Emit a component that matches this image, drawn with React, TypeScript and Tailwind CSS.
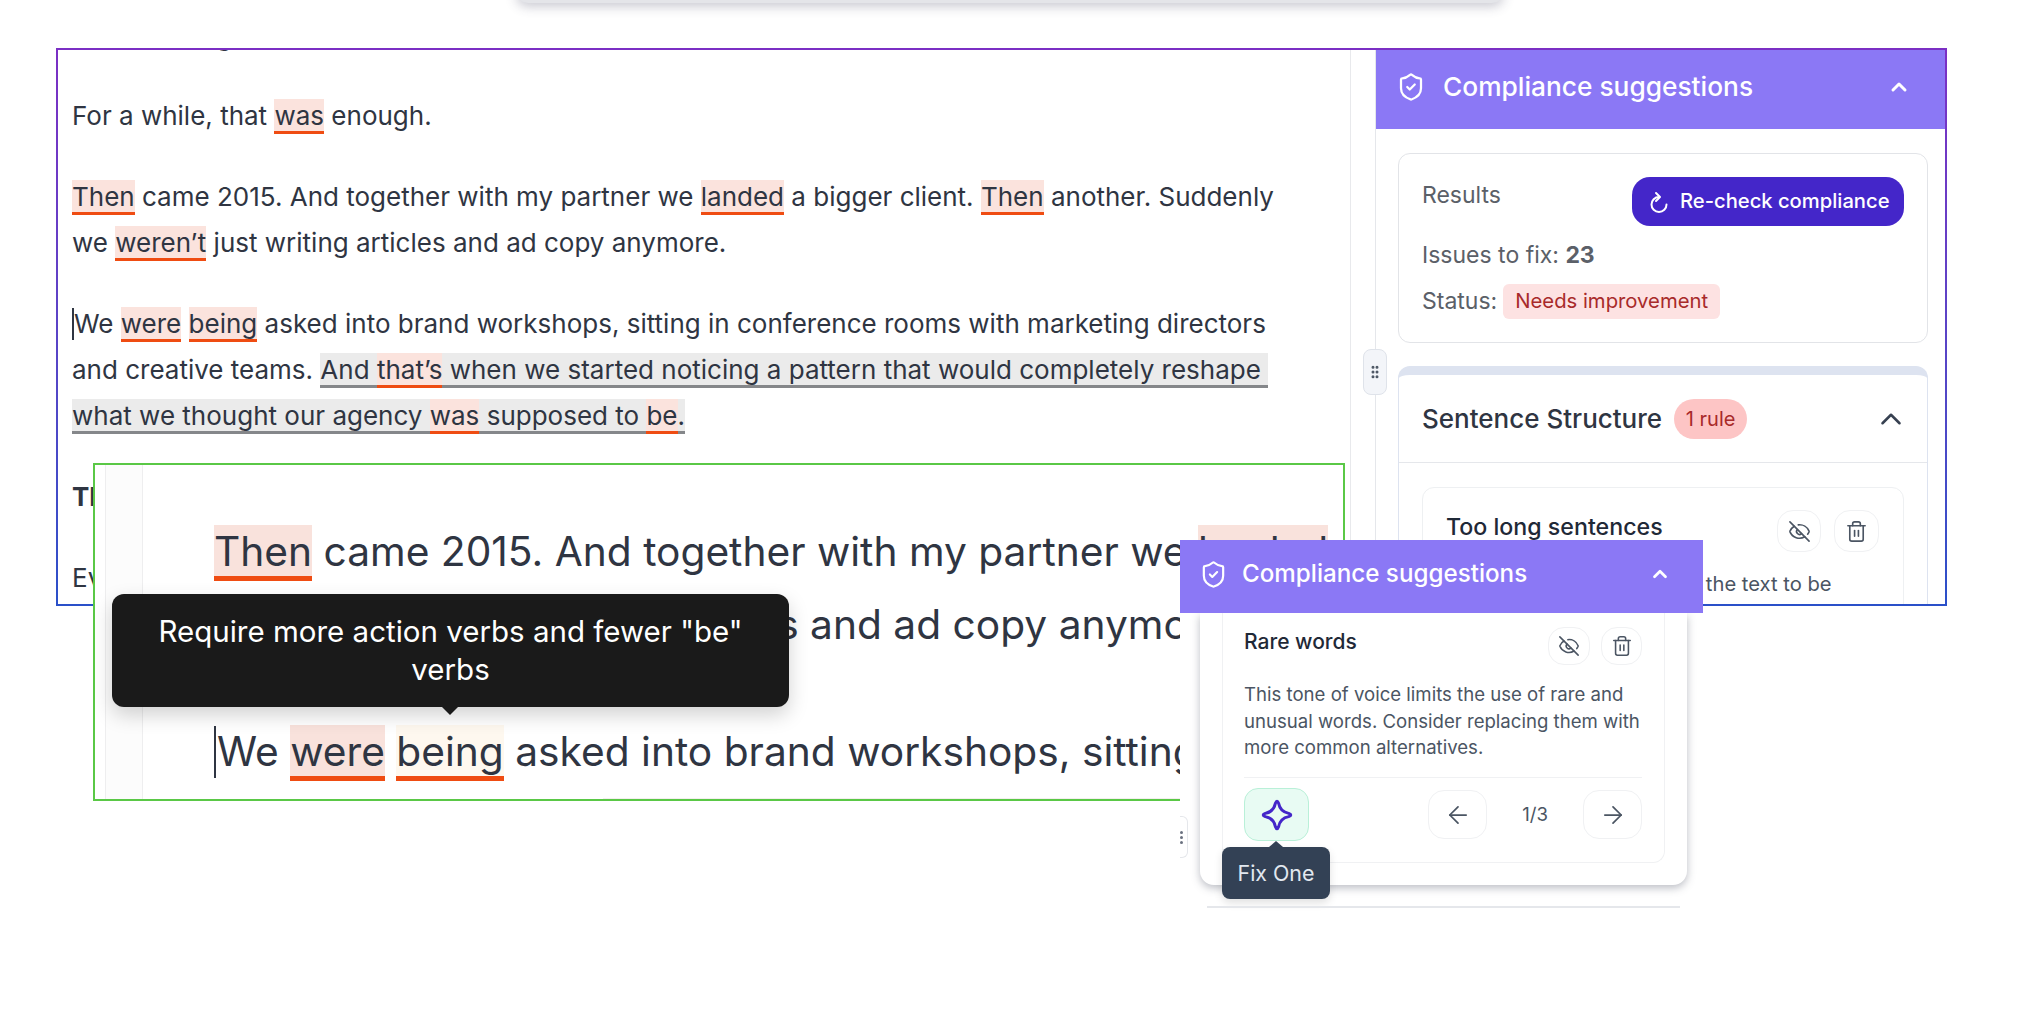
import React from "react";
import { ArrowLeft, ArrowRight, ChevronUp, EyeOff, GripVertical, ShieldCheck, Trash2 } from "lucide-react";

function Mark({ children }: { children: React.ReactNode }): React.JSX.Element {
	return <span className="bg-[#fbe3dd] border-b-[3px] border-[#ef4c12] pt-px">{children}</span>;
}

function Gray({ children }: { children: React.ReactNode }): React.JSX.Element {
	return <span className="bg-[#ebebeb] border-b-[3px] border-[#85878a] pt-px">{children}</span>;
}

function BigMark({ children, pale }: { children: React.ReactNode; pale?: boolean }): React.JSX.Element {
	return (
		<span className={pale ? "bg-[#fef8ef] border-b-[5px] border-[#ef4c12] pt-[2px]" : "bg-[#f9e2dc] border-b-[5px] border-[#ef4c12] pt-[2px]"}>
			{children}
		</span>
	);
}

function IconBtn({ children, size }: { children: React.ReactNode; size: string }): React.JSX.Element {
	return (
		<div className={`${size} flex items-center justify-center rounded-[16px] border border-[#f0f1f3] bg-white text-[#4b5563]`}>
			{children}
		</div>
	);
}

function Editor(): React.JSX.Element {
	return (
		<div className="flex-1 border-r border-[#e8e9ec] pl-[14px] -mt-[37px] text-[26px] leading-[46px] text-[#2f3542] whitespace-nowrap flex flex-col gap-[35px]">
			<p className="-mb-px">We had a big list of jobs and plenty of work.</p>
			<p>
				For a while, that <Mark>was</Mark> enough.
			</p>
			<p>
				<Mark>Then</Mark> came 2015. And together with my partner we <Mark>landed</Mark> a bigger client. <Mark>Then</Mark> another. Suddenly
				<br />
				we <Mark>weren’t</Mark> just writing articles and ad copy anymore.
			</p>
			<p className="relative">
				<span className="absolute left-0 top-[7px] h-[32px] w-[2px] bg-[#2f3542]" />
				<span className="ml-[2px]">We</span> <Mark>were</Mark> <Mark>being</Mark> asked into brand workshops, sitting in conference rooms with marketing directors
				<br />
				and creative teams.{" "}
				<Gray>
					And <Mark>that’s</Mark> when we started noticing a pattern that would completely reshape&nbsp;
				</Gray>
				<br />
				<Gray>
					what we thought our agency <Mark>was</Mark> supposed to <Mark>be</Mark>.
				</Gray>
			</p>
			<p className="font-bold">Then we saw it.</p>
			<p>Every client said the same thing.</p>
		</div>
	);
}

function Sidebar(): React.JSX.Element {
	return (
		<div className="w-[570px] shrink-0 border-l border-[#e5e7eb] flex flex-col">
			<div className="h-[79px] shrink-0 bg-[#8b78f5] flex items-center pl-[20px] pr-[34px] pb-[5px] text-white">
				<ShieldCheck className="w-[30px] h-[30px]" strokeWidth={1.8} />
				<span className="ml-[17px] text-[26.3px] font-medium flex-1">Compliance suggestions</span>
				<ChevronUp className="w-[24px] h-[24px]" strokeWidth={3} />
			</div>
			<div className="pt-[24px] pl-[22px] pr-[17px] flex flex-col gap-[23px]">
				<div className="h-[190px] rounded-[12px] border border-[#e2e4e8] bg-white px-[23px] pt-[23px] text-[23px] text-[#5b6068]">
					<div className="flex justify-between items-start">
						<span className="mt-[1px]">Results</span>
						<div className="h-[49px] w-[272px] rounded-[18px] bg-[#4426c9] text-white flex items-center pl-[15px] text-[20.2px] font-medium">
							<svg viewBox="0 0 24 24" className="w-[24px] h-[24px] mr-[9px]" fill="none" stroke="currentColor" strokeWidth="2" strokeLinecap="round" strokeLinejoin="round">
								<path d="M12 7A7.500 7.500 0 1 0 19.500 14.500" />
								<path d="M9 3L13 7L9 11" />
							</svg>
							Re-check compliance
						</div>
					</div>
					<p className="mt-[14px] leading-[30px]">
						Issues to fix: <b className="font-bold">23</b>
					</p>
					<div className="mt-[14px] flex items-center h-[35px]">
						<span>Status:</span>
						<span className="ml-[6px] h-[35px] px-[12px] rounded-[6px] bg-[#fde2e2] text-[#a82a2a] text-[20.3px] flex items-center">Needs improvement</span>
					</div>
				</div>
				<div className="rounded-t-[12px] border-t-[9px] border-x border-[#dde3f0] bg-white">
					<div className="h-[88px] border-b border-[#e5e7eb] flex items-center pl-[23px] pr-[19px]">
						<span className="text-[26px] font-medium text-[#2f3542]">Sentence Structure</span>
						<span className="ml-[12px] h-[40px] w-[73px] rounded-full bg-[#fdc5c5] text-[#a82a2a] text-[20px] flex items-center justify-center">1 rule</span>
						<ChevronUp className="ml-auto w-[34px] h-[34px] text-[#374151]" strokeWidth={1.8} />
					</div>
					<div className="mx-[23px] mt-[24px] rounded-t-[12px] border border-[#eef0f2] pl-[23px] pr-[24px] pt-[22px] h-[200px]">
						<div className="flex justify-between">
							<span className="text-[23.2px] font-medium text-[#1f2937] leading-[34px]">Too long sentences</span>
							<div className="flex gap-[13px]">
								<IconBtn size="w-[44px] h-[42px]">
									<EyeOff className="w-[23px] h-[23px]" strokeWidth={1.7} />
								</IconBtn>
								<IconBtn size="w-[45px] h-[42px]">
									<Trash2 className="w-[23px] h-[23px]" strokeWidth={1.7} />
								</IconBtn>
							</div>
						</div>
						<p className="mt-[17px] text-[20.2px] leading-[30px] text-[#4b5563]">
							This tone of voice requires the text to be
							<br />
							clear, short and direct in every sentence.
						</p>
					</div>
				</div>
			</div>
		</div>
	);
}

function Snippet(): React.JSX.Element {
	return (
		<div className="absolute left-[93px] top-[463px] w-[1252px] h-[338px] border-2 border-[#5ac846] bg-white overflow-hidden flex">
			<div className="w-[10px] shrink-0" />
			<div className="w-[38px] shrink-0 border-x border-[#eeeeef] bg-[#fcfcfc]" />
			<div className="pl-[71px] pt-[50px] text-[40.7px] leading-[73px] text-[#2f3542] whitespace-nowrap">
				<p>
					<BigMark>Then</BigMark> came 2015. And together with my partner we <BigMark>landed</BigMark> a bigger client.
					<br />
					we <BigMark>weren’t</BigMark> just writing articles and ad copy anymore.
				</p>
				<p className="relative mt-[54px]">
					<span className="absolute left-0 top-[11px] h-[52px] w-[2px] bg-[#2f3542]" />
					<span className="ml-[3px]">We</span> <BigMark>were</BigMark> <BigMark pale>being</BigMark> asked into brand workshops, sitting in conference rooms
					<br />
					and creative teams. <span className="bg-[#f3efee] pt-[2px]">And that’s when we started noticing</span>
				</p>
			</div>
		</div>
	);
}

function Tooltip(): React.JSX.Element {
	return (
		<div className="absolute left-[112px] top-[594px] w-[677px] h-[113px] rounded-[12px] bg-[#1a1a1a] shadow-[0_8px_20px_rgba(0,0,0,0.18)] flex items-center justify-center text-center text-white text-[29.5px] leading-[38px]">
			<p className="-mt-[2px]">
				Require more action verbs and fewer "be"
				<br />
				verbs
			</p>
			<span className="absolute left-[330px] -bottom-[8px] w-0 h-0 border-x-[8px] border-x-transparent border-t-[8px] border-t-[#1a1a1a]" />
		</div>
	);
}

function FloatingPanel(): React.JSX.Element {
	return (
		<div className="absolute left-[1180px] top-[540px] w-[523px] h-[372px] bg-white">
			<div className="relative z-10 h-[73px] bg-[#8b78f5] flex items-center pl-[19px] pr-[32px] pb-[5px] text-white">
				<ShieldCheck className="w-[29px] h-[29px]" strokeWidth={1.8} />
				<span className="ml-[14px] text-[24.2px] font-medium flex-1">Compliance suggestions</span>
				<ChevronUp className="w-[22px] h-[22px]" strokeWidth={3} />
			</div>
			<div className="absolute left-0 top-[276px] w-[8px] h-[42px] rounded-r-[6px] border border-l-0 border-[#e5e7eb] flex items-center">
				<span className="flex flex-col gap-[2px]">
					<span className="w-[3px] h-[3px] rounded-full bg-[#6b7280]" />
					<span className="w-[3px] h-[3px] rounded-full bg-[#6b7280]" />
					<span className="w-[3px] h-[3px] rounded-full bg-[#6b7280]" />
				</span>
			</div>
			<div className="ml-[20px] w-[487px] h-[272px] rounded-b-[14px] bg-white shadow-[0_3px_8px_rgba(60,65,85,0.35)] px-[22px] pb-[22px]">
				<div className="h-full rounded-b-[12px] border-x border-b border-[#f0f1f3] pl-[21px] pr-[22px] pt-[14px]">
					<div className="flex justify-between">
						<span className="text-[21px] font-medium text-[#1f2937] leading-[30px]">Rare words</span>
						<div className="flex gap-[11px]">
							<IconBtn size="w-[42px] h-[38px]">
								<EyeOff className="w-[22px] h-[22px]" strokeWidth={1.7} />
							</IconBtn>
							<IconBtn size="w-[41px] h-[38px]">
								<Trash2 className="w-[22px] h-[22px]" strokeWidth={1.7} />
							</IconBtn>
						</div>
					</div>
					<p className="mt-[16px] text-[18.6px] leading-[26.7px] text-[#4b5563] whitespace-nowrap">
						This tone of voice limits the use of rare and
						<br />
						unusual words. Consider replacing them with
						<br />
						more common alternatives.
					</p>
					<div className="mt-[16px] border-t border-[#f0f1f3] pt-[10px] flex items-center">
						<div className="w-[65px] h-[53px] rounded-[14px] border border-[#b9f0d8] bg-[#e8fbf3] flex items-center justify-center">
							<svg viewBox="0 0 32 32" className="w-[34px] h-[34px]" fill="none" stroke="#4426c9" strokeWidth="2.8" strokeLinejoin="round">
								<path d="M14.500 5Q16 1 17.500 5Q19 13 27 14.500Q31 16 27 17.500Q19 19 17.500 27Q16 31 14.500 27Q13 19 5 17.500Q1 16 5 14.500Q13 13 14.500 5z" />
							</svg>
						</div>
						<IconBtn size="ml-auto w-[59px] h-[49px]">
							<ArrowLeft className="w-[28px] h-[28px]" strokeWidth={1.5} />
						</IconBtn>
						<span className="w-[96px] text-center text-[18.6px] text-[#4b5563]">1/3</span>
						<IconBtn size="w-[59px] h-[49px]">
							<ArrowRight className="w-[28px] h-[28px]" strokeWidth={1.5} />
						</IconBtn>
					</div>
				</div>
			</div>
			<div className="absolute left-[42px] top-[307px] w-[108px] h-[52px] rounded-[8px] bg-[#334155] text-[#e2e8f0] text-[21.4px] flex items-center justify-center shadow-[0_4px_8px_rgba(0,0,0,0.12)]">
				Fix One
				<span className="absolute left-[47px] -top-[6px] w-0 h-0 border-x-[7px] border-x-transparent border-b-[6px] border-b-[#334155]" />
			</div>
			<div className="absolute left-[27px] top-[366px] w-[473px] h-[2px] bg-[#e5e7eb]" />
		</div>
	);
}

export default function App(): React.JSX.Element {
	return (
		<div className="relative w-[2024px] h-[1030px] overflow-hidden bg-white font-[family-name:Inter,sans-serif] pt-[48px] pl-[56px]">
			<div className="absolute left-[516px] -top-[10px] w-[988px] h-[13px] rounded-b-[12px] bg-[#e4e5e9] shadow-[0_3px_12px_rgba(60,60,90,0.3)]" />
			<div className="w-[1891px] h-[558px] p-[2px] bg-linear-to-b from-[#7b2fc4] to-[#2a50c9]">
				<div className="relative w-full h-full bg-white overflow-hidden flex">
					<Editor />
					<div className="w-[24px] shrink-0" />
					<Sidebar />
					<div className="absolute left-[1305px] top-[299px] w-[24px] h-[46px] rounded-[8px] border border-[#dfe3ea] bg-[#f3f5f9] flex items-center justify-center text-[#4b5563]">
						<GripVertical className="w-[16px] h-[16px]" strokeWidth={2.5} />
					</div>
				</div>
			</div>
			<Snippet />
			<Tooltip />
			<FloatingPanel />
		</div>
	);
}
